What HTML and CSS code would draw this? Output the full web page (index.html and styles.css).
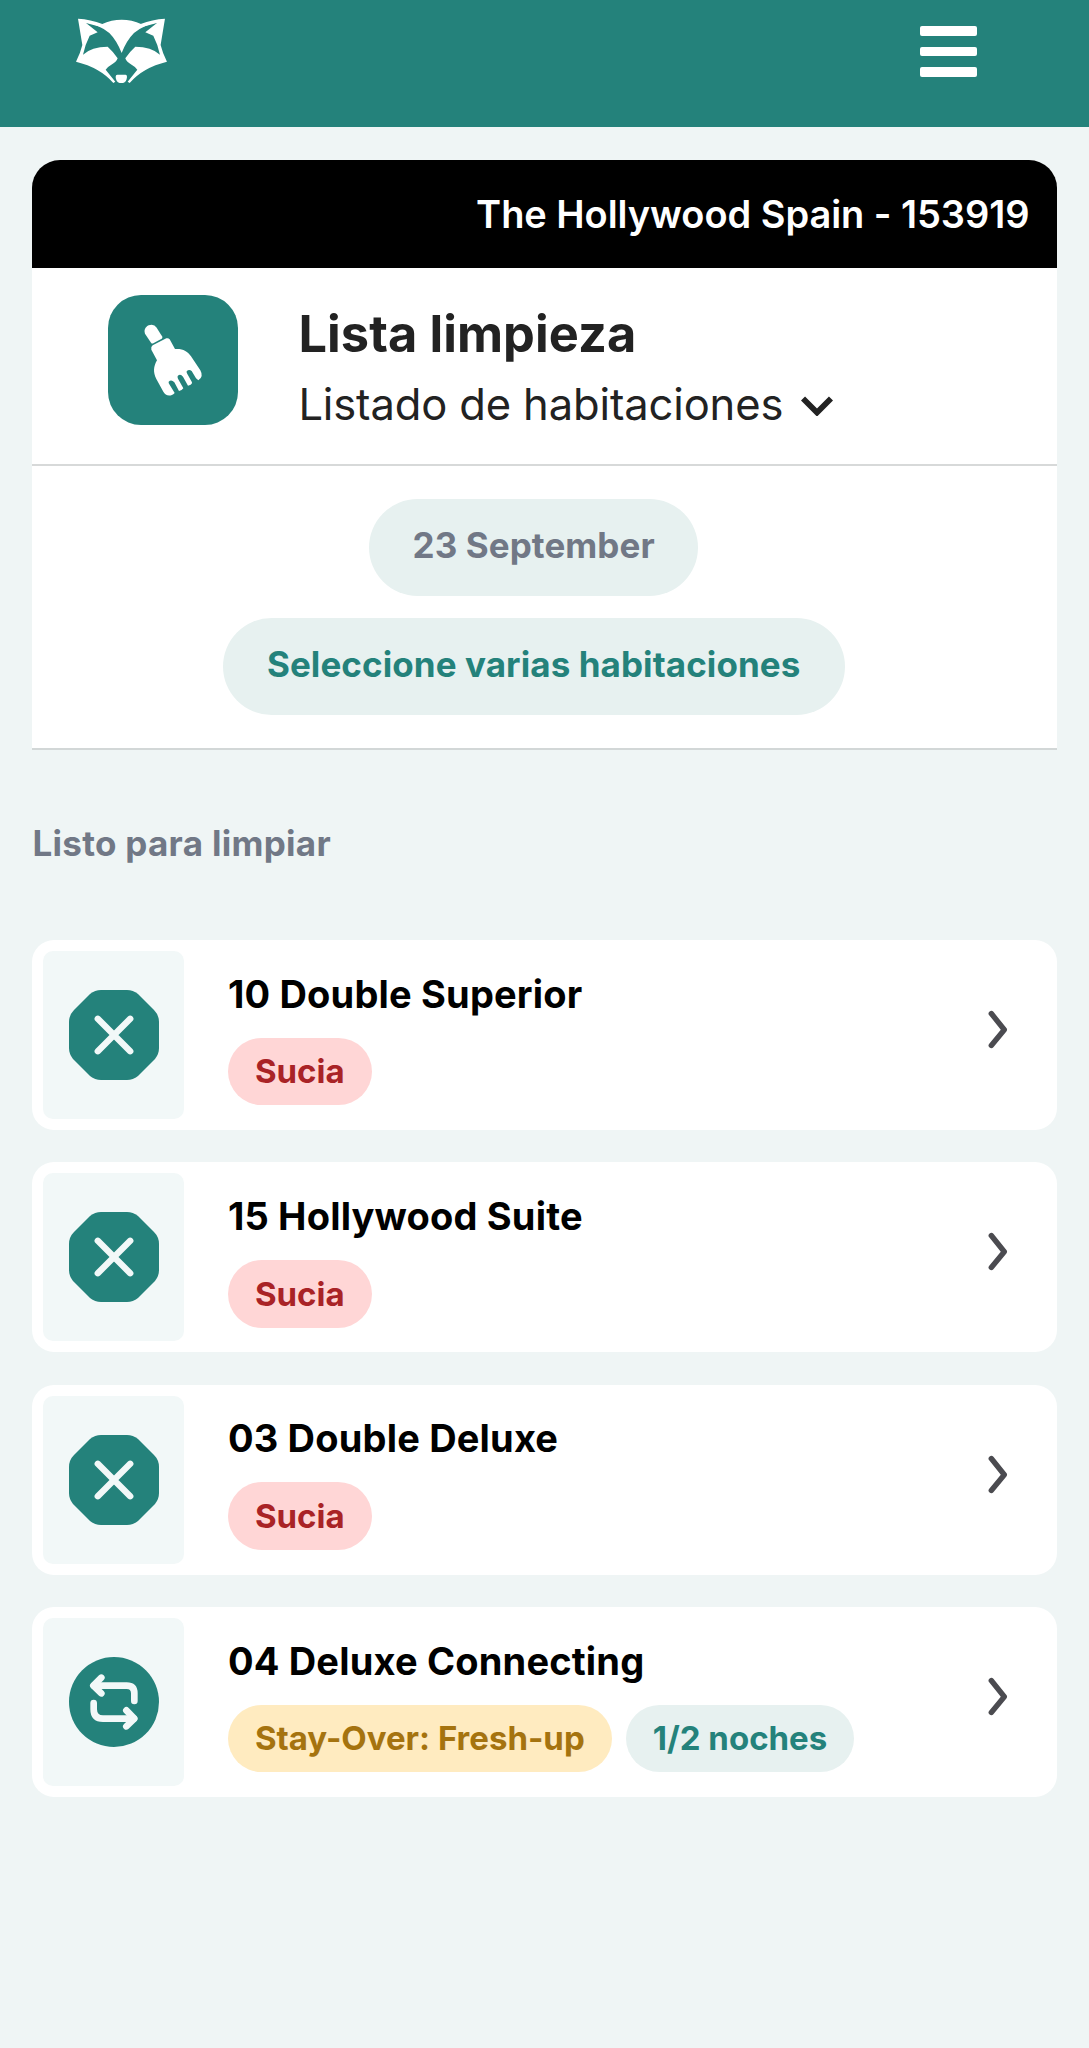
FILE: index.html
```html
<!DOCTYPE html>
<html lang="es">
<head>
<meta charset="utf-8">
<title>Lista limpieza</title>
<link rel="stylesheet" href="styles.css">
</head>
<body>
<svg class="symbols" aria-hidden="true">
  <symbol id="stop" viewBox="0 0 90 90">
    <path fill="#24827b" d="M32 0H58Q64 0 69 4L85 20Q90 25 90 32V58Q90 64 86 69L69 86Q64 90 58 90H32Q26 90 21 86L4 69Q0 64 0 58V32Q0 25 5 20L21 4Q26 0 32 0Z"/>
    <path d="M28.800 28.800L61.200 61.200M61.200 28.800L28.800 61.200" stroke="#f2f8f8" stroke-width="6.400" stroke-linecap="round"/>
  </symbol>
  <symbol id="next" viewBox="0 0 20 40">
    <path d="M3.300 3.500L16.300 19.800L3.300 35.500" fill="none" stroke="#4b4b50" stroke-width="5.400" stroke-linecap="round" stroke-linejoin="round"/>
  </symbol>
</svg>
<header class="topbar">
  <svg class="logo" viewBox="48 52 274 196">
    <path fill="#fff" d="M78 65Q104 65 125 71Q185 44 245 71Q266 65 292 65Q250 74 222 97Q200 119 185 157Q170 119 148 97Q120 74 78 65Z"/>
    <path id="face" fill="#fff" d="M54 54Q92 56 127 70L120 78L78 67L113 95L89 105Q76 130 69 162Q95 138 143 138Q160 153 173 173Q170 184 153 193Q142 199 137 207L166 243L160 247Q121 201 48 183Q61 158 67 133Z"/>
    <use href="#face" transform="translate(369 0) scale(-1 1)"/>
    <path fill="#fff" d="M172 222H197Q201 222 201 229Q200 247 184 248Q168 247 167 229Q167 222 172 222Z"/>
  </svg>
  <div class="burger"><i></i><i></i><i></i></div>
</header>
<main>
  <section class="panel">
    <div class="hotel"><span>The Hollywood Spain - 153919</span></div>
    <div class="heading">
      <svg class="app" viewBox="0 0 390 390">
        <rect width="390" height="390" rx="99" fill="#24827b"/>
        <g fill="#fff">
          <path d="M111 116C105 99 119 89 131 89Q140 89 146 98L163 125Q164 129 161 131L136 145Q132 147 129 143Z"/>
          <path d="M134 151L175 130Q181 128 185 133L201 162C223 160 239 168 249 184L277 226Q288 246 271 256L264 250L251 228Q243 221 236 229Q235 233 238 237L252 262Q253 266 248 269L240 272L225 245Q217 235 209 243Q208 247 210 251L226 280Q222 287 213 288L199 262Q190 252 182 260Q181 264 184 268L200 294C187 307 172 302 166 290L145 252C135 232 136 215 147 196L130 164Q128 155 134 151Z"/>
        </g>
      </svg>
      <div>
        <h1>Lista limpieza</h1>
        <div class="sub"><span>Listado de habitaciones</span>
          <svg class="down" viewBox="0 0 32 20"><path d="M2 2.500L16 16.500L30 2.500" fill="none" stroke="#222" stroke-width="5.800"/></svg>
        </div>
      </div>
    </div>
    <div class="filters">
      <div class="pill date"><span>23 September</span></div>
      <div class="pill multi"><span>Seleccione varias habitaciones</span></div>
    </div>
  </section>
  <h2>Listo para limpiar</h2>
  <section class="rooms">
    <article class="room">
      <div class="tile"><svg><use href="#stop"/></svg></div>
      <div class="info"><h3>10 Double Superior</h3><div class="tags"><span class="tag dirty">Sucia</span></div></div>
      <svg class="next"><use href="#next"/></svg>
    </article>
    <article class="room">
      <div class="tile"><svg><use href="#stop"/></svg></div>
      <div class="info"><h3>15 Hollywood Suite</h3><div class="tags"><span class="tag dirty">Sucia</span></div></div>
      <svg class="next"><use href="#next"/></svg>
    </article>
    <article class="room">
      <div class="tile"><svg><use href="#stop"/></svg></div>
      <div class="info"><h3>03 Double Deluxe</h3><div class="tags"><span class="tag dirty">Sucia</span></div></div>
      <svg class="next"><use href="#next"/></svg>
    </article>
    <article class="room">
      <div class="tile">
        <svg viewBox="0 0 270 270">
          <circle cx="135" cy="135" r="135" fill="#24827b"/>
          <g fill="none" stroke="#f2f8f8" stroke-width="20" stroke-linecap="round" stroke-linejoin="round">
            <path d="M75 86H173Q196 86 196 109V132"/>
            <path d="M97 62L73 86L97 109"/>
            <path d="M74 138V157Q74 185 102 185H194"/>
            <path d="M172 160L196 185L172 208"/>
          </g>
        </svg>
      </div>
      <div class="info"><h3>04 Deluxe Connecting</h3><div class="tags"><span class="tag fresh">Stay-Over: Fresh-up</span><span class="tag nights">1/2 noches</span></div></div>
      <svg class="next"><use href="#next"/></svg>
    </article>
  </section>
</main>
</body>
</html>
```
FILE: styles.css
```css
* { box-sizing: border-box; }
body {
  margin: 0;
  min-height: 2048px;
  background: #eff5f5;
  font-family: Inter, "Liberation Sans", sans-serif;
  color: #222;
}
svg { display: block; flex: none; }
h1, h2, h3 { margin: 0; }
.symbols { display: none; }
.topbar {
  height: 127px;
  padding: 17.500px 112px 0 76px;
  display: flex;
  justify-content: space-between;
  align-items: flex-start;
  background: #24827b;
}
.logo { width: 91.300px; height: 65.300px; }
.burger {
  display: flex;
  flex-direction: column;
  gap: 11px;
  width: 57.500px;
  margin-top: 8.500px;
}
.burger i { height: 9.600px; border-radius: 2px; background: #fff; }
main { padding: 33px 32.500px 0 32.400px; }
.panel {
  height: 590px;
  background: #fff;
  border-bottom: 2px solid #d2d7d7;
  border-radius: 28px 28px 0 0;
  overflow: hidden;
}
.hotel {
  height: 108px;
  padding-right: 27px;
  display: flex;
  align-items: center;
  justify-content: flex-end;
  background: #000;
  color: #fff;
  font-size: 38px;
  font-weight: 600;
  letter-spacing: -0.050px;
  white-space: nowrap;
}
.heading {
  height: 197.500px;
  padding: 27px 0 0 76px;
  display: flex;
  gap: 60px;
  border-bottom: 2px solid #d7d9d9;
}
.app { width: 130px; height: 130px; }
h1 {
  margin-top: 4px;
  font-size: 50.500px;
  line-height: 70px;
  font-weight: 700;
  letter-spacing: 0.080px;
}
.sub {
  display: flex;
  align-items: center;
  gap: 18px;
  font-size: 43.500px;
  letter-spacing: -0.130px;
  line-height: 71px;
}
.down { width: 32px; height: 20px; margin-top: 2px; }
.filters {
  padding: 33.500px 21.500px 0 0;
  display: flex;
  flex-direction: column;
  align-items: center;
  gap: 22px;
}
.pill {
  height: 97px;
  padding-bottom: 5px;
  border-radius: 49px;
  display: flex;
  align-items: center;
  justify-content: center;
  background: #e7f1f0;
  font-size: 35px;
  font-weight: 700;
  letter-spacing: 0.080px;
}
.date { width: 329px; color: #717886; }
.multi { width: 622px; color: #24827b; }
h2 {
  height: 190.300px;
  padding-top: 68px;
  font-size: 35px;
  line-height: 50px;
  font-weight: 700;
  letter-spacing: 0.300px;
  color: #717886;
}
.rooms { display: flex; flex-direction: column; gap: 32.200px; }
.room {
  height: 190px;
  padding: 11px 49px 11px 11px;
  display: flex;
  background: #fff;
  border-radius: 22px;
}
.tile {
  width: 141px;
  height: 168px;
  display: flex;
  align-items: center;
  justify-content: center;
  background: #f2f8f8;
  border-radius: 10px;
}
.tile svg { width: 90px; height: 90px; }
.info { flex: 1; margin-left: 43.500px; }
h3 {
  padding-top: 17.700px;
  font-size: 38px;
  line-height: 50px;
  font-weight: 700;
  letter-spacing: 0.180px;
  color: #000;
}
.tags { display: flex; gap: 14px; margin-top: 19px; }
.tag {
  height: 67.500px;
  padding: 0.500px 27px 0;
  border-radius: 34px;
  font-size: 33px;
  font-weight: 700;
  line-height: 67.500px;
  white-space: nowrap;
}
.dirty { background: #ffd6d6; color: #a92326; }
.fresh { background: #ffebc0; color: #a5730f; }
.nights { background: #e7f1f0; color: #24827b; }
.next { width: 20px; height: 40px; margin-top: 59px; }
```
